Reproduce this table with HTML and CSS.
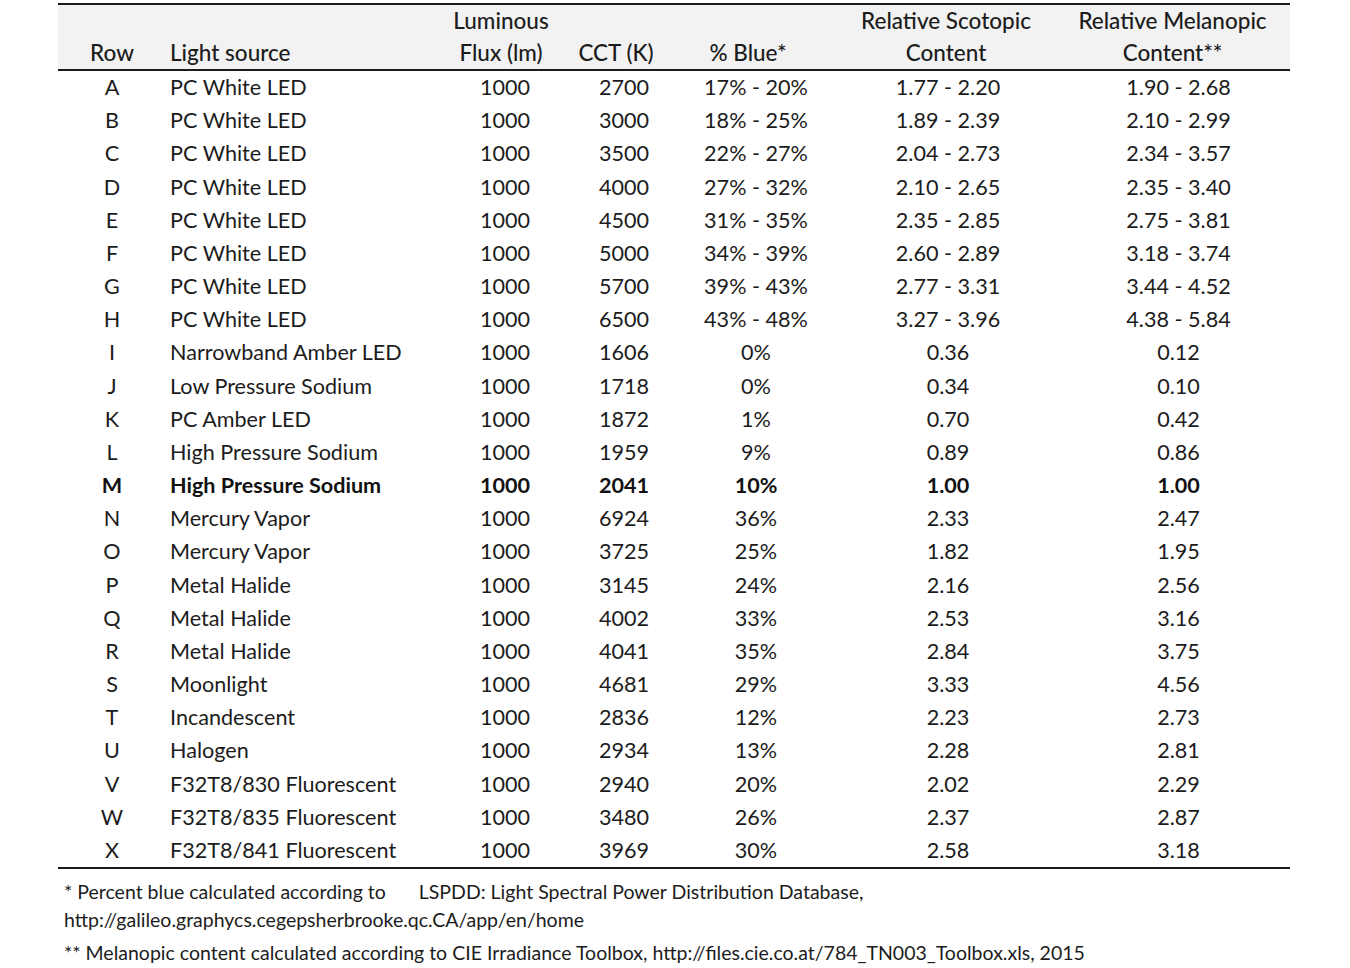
FILE: index.html
```html
<!DOCTYPE html>
<html>
<head>
<meta charset="utf-8">
<link rel="stylesheet" href="styles.css">
</head>
<body>
<div class="page">
<table class="data">
<colgroup>
<col class="c-row"><col class="c-src"><col class="c-flux"><col class="c-cct"><col class="c-blue"><col class="c-sco"><col class="c-mel">
</colgroup>
<thead>
<tr>
<th class="ctr">Row</th>
<th class="left">Light source</th>
<th class="ctr h-flux">Luminous<br>Flux (lm)</th>
<th class="ctr h-cct">CCT (K)</th>
<th class="ctr h-blue">% Blue*</th>
<th class="ctr h-sco">Relative Scotopic<br>Content</th>
<th class="ctr h-mel">Relative Melanopic<br>Content**</th>
</tr>
</thead>
<tbody>
<tr><td>A</td><td class="left">PC White LED</td><td>1000</td><td>2700</td><td>17% - 20%</td><td>1.77 - 2.20</td><td>1.90 - 2.68</td></tr>
<tr><td>B</td><td class="left">PC White LED</td><td>1000</td><td>3000</td><td>18% - 25%</td><td>1.89 - 2.39</td><td>2.10 - 2.99</td></tr>
<tr><td>C</td><td class="left">PC White LED</td><td>1000</td><td>3500</td><td>22% - 27%</td><td>2.04 - 2.73</td><td>2.34 - 3.57</td></tr>
<tr><td>D</td><td class="left">PC White LED</td><td>1000</td><td>4000</td><td>27% - 32%</td><td>2.10 - 2.65</td><td>2.35 - 3.40</td></tr>
<tr><td>E</td><td class="left">PC White LED</td><td>1000</td><td>4500</td><td>31% - 35%</td><td>2.35 - 2.85</td><td>2.75 - 3.81</td></tr>
<tr><td>F</td><td class="left">PC White LED</td><td>1000</td><td>5000</td><td>34% - 39%</td><td>2.60 - 2.89</td><td>3.18 - 3.74</td></tr>
<tr><td>G</td><td class="left">PC White LED</td><td>1000</td><td>5700</td><td>39% - 43%</td><td>2.77 - 3.31</td><td>3.44 - 4.52</td></tr>
<tr><td>H</td><td class="left">PC White LED</td><td>1000</td><td>6500</td><td>43% - 48%</td><td>3.27 - 3.96</td><td>4.38 - 5.84</td></tr>
<tr><td>I</td><td class="left">Narrowband Amber LED</td><td>1000</td><td>1606</td><td>0%</td><td>0.36</td><td>0.12</td></tr>
<tr><td>J</td><td class="left">Low Pressure Sodium</td><td>1000</td><td>1718</td><td>0%</td><td>0.34</td><td>0.10</td></tr>
<tr><td>K</td><td class="left">PC Amber LED</td><td>1000</td><td>1872</td><td>1%</td><td>0.70</td><td>0.42</td></tr>
<tr><td>L</td><td class="left">High Pressure Sodium</td><td>1000</td><td>1959</td><td>9%</td><td>0.89</td><td>0.86</td></tr>
<tr class="bold"><td>M</td><td class="left">High Pressure Sodium</td><td>1000</td><td>2041</td><td>10%</td><td>1.00</td><td>1.00</td></tr>
<tr><td>N</td><td class="left">Mercury Vapor</td><td>1000</td><td>6924</td><td>36%</td><td>2.33</td><td>2.47</td></tr>
<tr><td>O</td><td class="left">Mercury Vapor</td><td>1000</td><td>3725</td><td>25%</td><td>1.82</td><td>1.95</td></tr>
<tr><td>P</td><td class="left">Metal Halide</td><td>1000</td><td>3145</td><td>24%</td><td>2.16</td><td>2.56</td></tr>
<tr><td>Q</td><td class="left">Metal Halide</td><td>1000</td><td>4002</td><td>33%</td><td>2.53</td><td>3.16</td></tr>
<tr><td>R</td><td class="left">Metal Halide</td><td>1000</td><td>4041</td><td>35%</td><td>2.84</td><td>3.75</td></tr>
<tr><td>S</td><td class="left">Moonlight</td><td>1000</td><td>4681</td><td>29%</td><td>3.33</td><td>4.56</td></tr>
<tr><td>T</td><td class="left">Incandescent</td><td>1000</td><td>2836</td><td>12%</td><td>2.23</td><td>2.73</td></tr>
<tr><td>U</td><td class="left">Halogen</td><td>1000</td><td>2934</td><td>13%</td><td>2.28</td><td>2.81</td></tr>
<tr><td>V</td><td class="left">F32T8/830 Fluorescent</td><td>1000</td><td>2940</td><td>20%</td><td>2.02</td><td>2.29</td></tr>
<tr><td>W</td><td class="left">F32T8/835 Fluorescent</td><td>1000</td><td>3480</td><td>26%</td><td>2.37</td><td>2.87</td></tr>
<tr><td>X</td><td class="left">F32T8/841 Fluorescent</td><td>1000</td><td>3969</td><td>30%</td><td>2.58</td><td>3.18</td></tr>
</tbody>
</table>
<div class="notes">
<p class="note">* Percent blue calculated according to<span class="gap"></span>LSPDD: Light Spectral Power Distribution Database,<br>http://galileo.graphycs.cegepsherbrooke.qc.CA/app/en/home</p>
<p class="note">** Melanopic content calculated according to CIE Irradiance Toolbox, http://files.cie.co.at/784_TN003_Toolbox.xls, 2015</p>
</div>
</div>
</body>
</html>
```
FILE: styles.css
```css
html, body {
  margin: 0;
  padding: 0;
  background: #ffffff;
}
body {
  font-family: Lato, "Open Sans", "Liberation Sans", sans-serif;
  color: #1c1c1c;
}
.page {
  padding: 3px 60px 0 58px;
  width: 1232px;
}
.data {
  width: 1232px;
  border-collapse: collapse;
  table-layout: fixed;
  font-size: 21.6px;
}
.c-row { width: 108px; }
.c-src { width: 279px; }
.c-flux { width: 120px; }
.c-cct { width: 118px; }
.c-blue { width: 146px; }
.c-sco { width: 238px; }
.c-mel { width: 223px; }
.data thead tr {
  background: #f2f2f2;
  border-top: 2px solid #1a1a1a;
  border-bottom: 2px solid #1a1a1a;
}
.data th {
  font-size: 22.5px;
  font-weight: 500;
  line-height: 32px;
  padding: 0;
  vertical-align: bottom;
  text-align: center;
  white-space: nowrap;
}
.data th.left {
  text-align: left;
  padding-left: 4px;
}
.data th.h-flux { padding-right: 8px; }
.data th.h-cct { padding-right: 16px; }
.data th.h-blue { padding-right: 16px; }
.data th.h-sco { padding-right: 4px; }
.data th.h-mel { padding-right: 12px; }
.data tbody tr {
  height: 33.17px;
}
.data tbody tr:last-child {
  border-bottom: 2px solid #1a1a1a;
}
.data td {
  padding: 0;
  line-height: 33.17px;
  text-align: center;
  white-space: nowrap;
}
.data td.left {
  text-align: left;
  padding-left: 4px;
}
.data tr.bold td {
  font-weight: 700;
  color: #111111;
}
.notes {
  padding: 9px 0 0 6px;
}
.note {
  margin: 0;
  font-size: 19.5px;
  line-height: 28px;
  white-space: nowrap;
}
.note + .note {
  margin-top: 5px;
}
.gap {
  display: inline-block;
  width: 33px;
}
```
